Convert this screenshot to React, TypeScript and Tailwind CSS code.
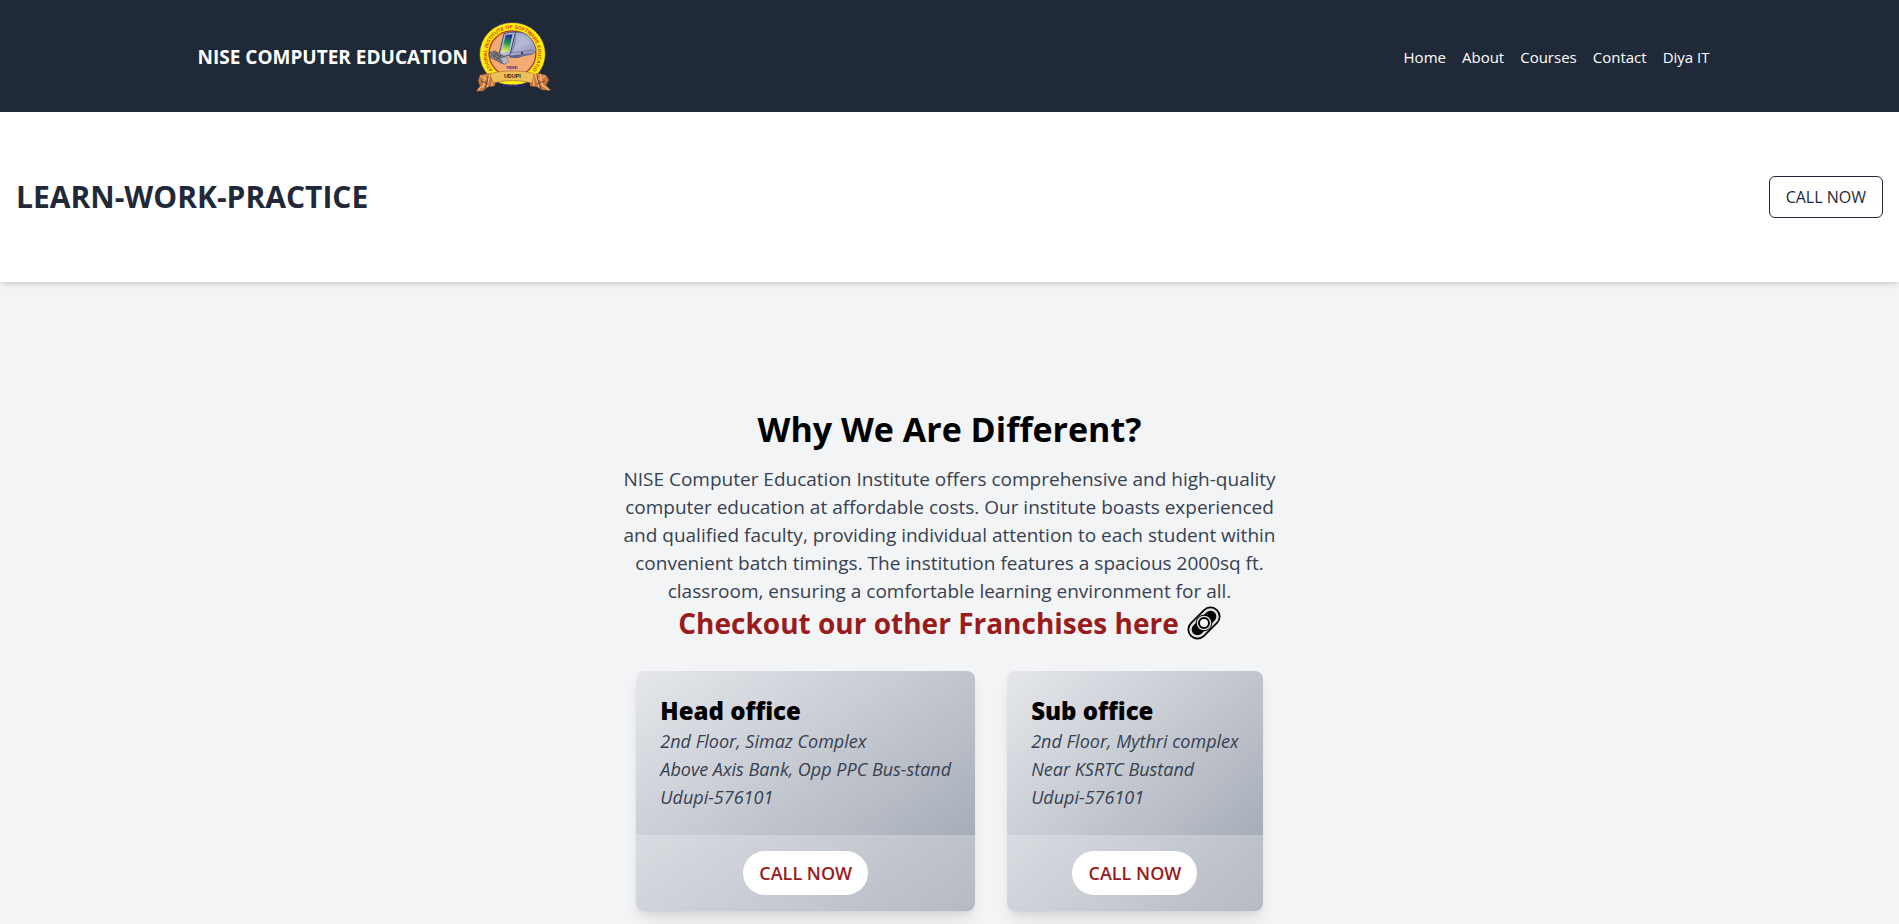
const navLinks = ["Home", "About", "Courses", "Contact", "Diya IT"];

const offices = [
  {
    name: "Head office",
    lines: ["2nd Floor, Simaz Complex", "Above Axis Bank, Opp PPC Bus-stand", "Udupi-576101"],
  },
  {
    name: "Sub office",
    lines: ["2nd Floor, Mythri complex", "Near KSRTC Bustand", "Udupi-576101"],
  },
];

function Logo() {
  return (
    <svg
      viewBox="0 0 76 72"
      className="h-[72px] w-[76px] overflow-visible"
      role="img"
      aria-label="National Institute of Software Education, Udupi"
    >
      <defs>
        <path id="seal-arc" d="M17 49.4 A25.5 25.5 0 1 1 56 49.4" />
        <linearGradient id="screen" x1="0.3" y1="0" x2="0.1" y2="1">
          <stop offset="0" stopColor="#1b2f96" />
          <stop offset="0.4" stopColor="#1f9450" />
          <stop offset="0.75" stopColor="#b9dd50" />
          <stop offset="1" stopColor="#f3f3a0" />
        </linearGradient>
        <linearGradient id="monitor" x1="0" y1="0" x2="1" y2="1">
          <stop offset="0" stopColor="#878caa" />
          <stop offset="0.5" stopColor="#adb3d2" />
          <stop offset="1" stopColor="#8b90b4" />
        </linearGradient>
      </defs>
      <ellipse cx="36.5" cy="33" rx="33" ry="31.6" fill="#fdf000" stroke="#3a2a80" strokeWidth="0.8" />
      <ellipse cx="36.5" cy="32.6" rx="23.4" ry="22.8" fill="#f2ab74" stroke="#b5331e" strokeWidth="1.3" />
      <text fontSize="5" fontWeight="700" fill="#d8341a" fontFamily="Liberation Sans, sans-serif">
        <textPath href="#seal-arc" startOffset="50%" textAnchor="middle">
          NATIONAL INSTITUTE OF SOFTWARE EDUCATION
        </textPath>
      </text>
      <path d="M36 11 L47 11.5 Q56 15 60 28 Q60 32 55 33.5 L34 36 L32 33Z" fill="url(#monitor)" stroke="#565b80" strokeWidth="0.8" />
      <path d="M40 11.5 Q40 24 35 32 L58 29" fill="none" stroke="#666b90" strokeWidth="0.7" />
      <path d="M40 12 Q50 13 54 23 L39 29Z" fill="#b8bddb" opacity="0.6" />
      <path d="M28 13 Q33 10.5 39.5 11 L34 34 Q28 36 22.5 35.5Z" fill="#b4b9d4" stroke="#454a6c" strokeWidth="1" />
      <path d="M29.6 14 L36.6 13.2 L32.4 30.5 L25.4 32Z" fill="url(#screen)" />
      <path d="M34 34.5 L56 32 L42 37 L34 37Z" fill="#5f658a" />
      <circle cx="46" cy="32" r="1.1" fill="#20233a" />
      <path d="M13 32 L19 30 L27 35 L31 38 L29 43 L25 42 L13 35.5Z" fill="#83808a" stroke="#4b4650" strokeWidth="0.7" />
      <path d="M15 33 L26 40 M17.5 31.5 L28 38 M17 36 L21.5 31.5 M21 38.5 L25 34" stroke="#3a3640" strokeWidth="0.7" />
      <path d="M24 37 L31 35.5 L32.5 41 L28 43.5Z" fill="#b3b5c9" stroke="#666a80" strokeWidth="0.5" />
      <path d="M4 54 L14 52 L20 55 L19 65 L12 66 L7 70 L0 70.5 L4 65 L2 60Z" fill="#c5763b" />
      <path d="M70 54 L61 52 L54 55 L54 65 L61 66 L66 69 L75 69.5 L70 64 L73 59Z" fill="#c5763b" />
      <path d="M4 55 L13 59 M9 54 L7 67 M14 53 L11 66 M17 56 L16 65 M2 69 L10 62" stroke="#f1b778" strokeWidth="1.3" />
      <path d="M69 55 L61 59 M64 53 L67 66 M59 53 L63 66 M57 56 L58 65 M73 69 L64 62" stroke="#f1b778" strokeWidth="1.3" />
      <path d="M5 60 L12 63 M12 56 L9 69 M69 60 L61 63 M61 56 L65 68" stroke="#713521" strokeWidth="0.9" />
      <path d="M14 53 Q22 50 36 50 Q52 50 58 53 L56 62 Q36 57 17 62Z" fill="#efc05a" stroke="#a2662d" strokeWidth="0.6" />
      <text x="36" y="48.2" textAnchor="middle" fontSize="5" fontWeight="700" fill="#181488" fontFamily="Liberation Serif, serif">
        NISE
      </text>
      <text x="36.3" y="57" textAnchor="middle" fontSize="5.4" fontWeight="700" fill="#2c2414" fontFamily="Liberation Sans, sans-serif">
        UDUPI
      </text>
      <text x="37.5" y="65.6" textAnchor="middle" fontSize="4" fontWeight="700" fill="#2a1f86" fontFamily="Liberation Sans, sans-serif">
        SINCE 1998
      </text>
    </svg>
  );
}

function ChainIcon() {
  return (
    <svg viewBox="0 0 34 34" className="h-[34px] w-[34px]" aria-hidden="true">
      <g strokeLinecap="round" fill="none">
        <path d="M10.5 23.5 L23.5 10.5" stroke="#000" strokeWidth="20" />
        <path d="M10.5 23.5 L23.5 10.5" stroke="#dedfe0" strokeWidth="16.6" />
        <path d="M10.5 23.5 L23.5 10.5" stroke="#000" strokeWidth="11.6" />
      </g>
      <circle cx="17" cy="17" r="7.8" fill="#dedfe0" stroke="#000" strokeWidth="1" />
      <circle cx="17" cy="17" r="5" fill="#f3f4f6" stroke="#000" strokeWidth="2" />
    </svg>
  );
}

export default function App() {
  return (
    <div className="min-h-screen bg-[#f3f4f6] font-['Open_Sans','Noto_Sans',sans-serif] text-black">
      <nav className="bg-[#1f2937] text-white">
        <div className="mx-auto flex h-28 max-w-[1536px] items-center justify-between pt-0.5">
          <a href="#home" className="ml-4 flex items-center gap-2 text-[19px] font-bold">
            NISE COMPUTER EDUCATION
            <Logo />
          </a>
          <ul className="flex">
            {navLinks.map((label) => (
              <li key={label} className="px-2">
                <a href="#top" className="text-[15px]">{label}</a>
              </li>
            ))}
          </ul>
        </div>
      </nav>

      <header className="relative flex items-center justify-between bg-white px-4 py-16 shadow-md">
        <h1 className="text-3xl font-bold text-[#1f2937]">LEARN-WORK-PRACTICE</h1>
        <button type="button" className="rounded-md border border-[#1f2937] px-4 py-2 text-base text-[#1f2937]">
          CALL NOW
        </button>
      </header>

      <main className="flex flex-col items-center px-4 pt-[127px] pb-3 text-center">
        <h2 className="mb-4 text-[34px] leading-10 font-bold">Why We Are Different?</h2>
        <p className="max-w-2xl text-[19px] leading-7 text-[#374151]">
          NISE Computer Education Institute offers comprehensive and high-quality computer education at affordable
          costs. Our institute boasts experienced and qualified faculty, providing individual attention to each
          student within convenient batch timings. The institution features a spacious 2000sq ft. classroom,
          ensuring a comfortable learning environment for all.
        </p>
        <a href="#franchises" className="flex items-center gap-2 text-[28px] leading-9 font-bold text-[#991b1b]">
          Checkout our other Franchises here
          <ChainIcon />
        </a>

        <div className="mt-[30px] flex flex-wrap justify-center gap-8 text-left">
          {offices.map((office) => (
            <article key={office.name} className="overflow-hidden rounded-lg bg-linear-to-br/srgb from-[#e5e7eb] to-[#9ca3af] shadow-lg">
              <div className="p-6">
                <h3 className="text-2xl font-extrabold">{office.name}</h3>
                <address className="text-lg text-[#374151]">
                  {office.lines.map((line) => (
                    <p key={line}>{line}</p>
                  ))}
                </address>
              </div>
              <div className="flex justify-center bg-white/25 p-4">
                <button type="button" className="rounded-full bg-white px-4 py-2 text-lg font-semibold text-[#991b1b]">
                  CALL NOW
                </button>
              </div>
            </article>
          ))}
        </div>
      </main>
    </div>
  );
}
